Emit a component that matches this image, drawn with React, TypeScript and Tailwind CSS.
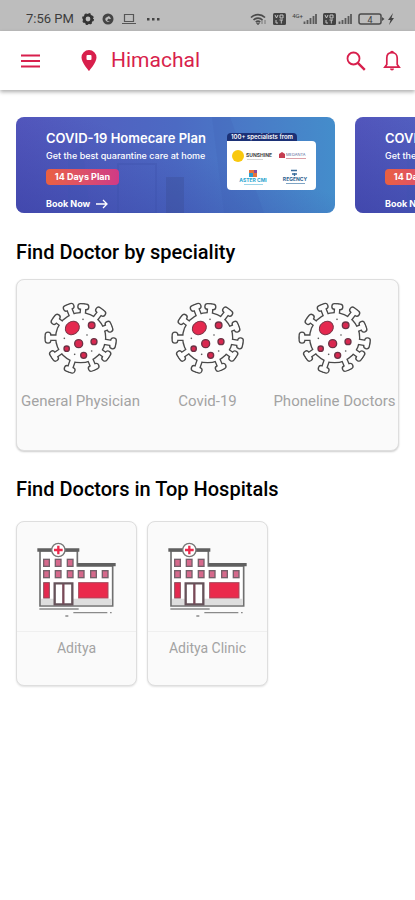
import React from 'react';

const specialities = ['General Physician', 'Covid-19', 'Phoneline Doctors'];
const hospitals = ['Aditya', 'Aditya Clinic'];

const spikes = [
  [77, 19], [121, 17], [173, 32], [198, 77], [210, 127], [190, 165],
  [152, 199], [80, 205], [33, 165], [15, 110], [38, 55],
];

const cells = [
  [146, 73, 10], [153, 122, 9], [107, 128, 12], [71, 143, 8], [122, 163, 9],
];

const dots = [[120, 55], [132, 102], [64, 112], [146, 150], [95, 160]];

const windows = [
  [131, 268], [166, 268], [202, 268],
  [131, 302], [166, 302], [202, 302], [235, 302], [272, 302], [307, 302],
];

const VirusLayer: React.FC<{ color: string; inset: number }> = ({ color, inset }) => (
  <g fill={color} stroke={color} strokeLinecap="round">
    <circle cx="113" cy="110" r={77 - inset} stroke="none" />
    {spikes.map(([x, y]) => {
      const angle = (Math.atan2(y - 110, x - 113) * 180) / Math.PI;
      const length = Math.hypot(x - 113, y - 110);
      return (
        <g key={`${x}-${y}`} transform={`translate(113 110) rotate(${angle})`}>
          <path d={`M40 0H${length}`} strokeWidth={20 - inset * 2} />
          <path d={`M${length} -8V8`} strokeWidth={21 - inset * 2} />
        </g>
      );
    })}
  </g>
);

const VirusIcon: React.FC = () => (
  <svg viewBox="0 0 225 225" className="h-[75px] w-[75px]" aria-hidden="true">
    <VirusLayer color="#4a4a4a" inset={0} />
    <VirusLayer color="#fdfdfd" inset={4} />
    <ellipse cx="88" cy="81" rx="22" ry="19" transform="rotate(-35 88 81)" fill="#e5294f" stroke="#7a3446" strokeWidth="3" />
    {cells.map(([x, y, r]) => (
      <circle key={`${x}-${y}`} cx={x} cy={y} r={r} fill="#d92850" stroke="#6b3345" strokeWidth="4" />
    ))}
    {dots.map(([x, y]) => (
      <circle key={`${x}-${y}`} cx={x} cy={y} r="2.5" fill="#555" />
    ))}
  </svg>
);

const HospitalIcon: React.FC = () => (
  <svg viewBox="105 210 249 240" className="h-20 w-[83px]" aria-hidden="true">
    <path d="M120 242H232V288H338V408H120Z" fill="#fff" stroke="#707070" strokeWidth="5" />
    <path d="M123 386H335V405H123Z" fill="#dedede" />
    <path d="M112 240H238M232 284H347" stroke="#606060" strokeWidth="10" />
    {windows.map(([x, y]) => (
      <rect key={`${x}-${y}`} x={x} y={y} width="17" height="21" fill="#d6698c" stroke="#75606a" strokeWidth="4" />
    ))}
    <rect x="131" y="338" width="17" height="46" fill="#e5294f" stroke="#8a4a58" strokeWidth="3" />
    <rect x="236" y="338" width="88" height="46" fill="#ea2a4c" stroke="#a8485c" strokeWidth="3" />
    <path d="M164 340H217V403H164Z" fill="#fff" stroke="#66535a" strokeWidth="7" />
    <path d="M190 342V402" stroke="#7a4a58" strokeWidth="7" />
    <circle cx="175" cy="240" r="20" fill="#fff" stroke="#777" strokeWidth="4" />
    <path d="M175 227V253M162 240H188" stroke="#ea2a4c" strokeWidth="7" />
    <path d="M118 417H236M220 428H322M330 428H335M196 438H205" stroke="#8a8a8a" strokeWidth="4" />
  </svg>
);

const SignalIcon: React.FC = () => (
  <svg viewBox="0 0 14 12" className="h-3 w-3.5" aria-hidden="true">
    <path d="M1.5 11V8.500M4.500 11V7M7.500 11V5M10.500 11V3M13 11V1" stroke="#5a5a5a" strokeWidth="1.800" />
  </svg>
);

const VolteIcon: React.FC = () => (
  <svg viewBox="0 0 13 12" className="h-3 w-[13px]" aria-hidden="true">
    <rect width="13" height="12" rx="1.500" fill="#444" />
    <path d="M2 2l1.500 3L5 2M7 2h3v3H7zM3 7v3h2M6.500 7H10M8.300 7v3.500" fill="none" stroke="#c4c4c4" />
  </svg>
);

const StatusBar: React.FC = () => (
  <div className="flex h-[31px] items-center bg-[#bdbdbd] pt-[7px] pr-5 pl-[26px] text-[#3c3c3c]">
    <span className="text-[13px]">7:56 PM</span>
    <div className="ml-2 flex items-center gap-2">
      <svg viewBox="0 0 12 12" className="h-3 w-3" aria-hidden="true">
        <circle cx="6" cy="6" r="3.800" fill="none" stroke="#333" strokeWidth="2.800" />
        <circle cx="6" cy="6" r="5.300" fill="none" stroke="#333" strokeWidth="1.300" strokeDasharray="2.100 2.060" />
      </svg>
      <svg viewBox="0 0 12 12" className="h-3 w-3" aria-hidden="true">
        <circle cx="6" cy="6" r="5.500" fill="#444" />
        <path d="M3.500 5L7 3l2 2.500-1 .8L6.500 5.500 5 7.500 8 9l-3-.2L3.300 7z" fill="#bdbdbd" />
      </svg>
      <svg viewBox="0 0 14 12" className="h-3 w-3.5" aria-hidden="true">
        <path d="M2.500 1.500h9v7h-9zM0 10.500h14" fill="none" stroke="#555" strokeWidth="1.200" />
      </svg>
      <svg viewBox="0 0 14 4" className="ml-0.5 h-1 w-3.5" aria-hidden="true">
        <path d="M1 1h2.500v2.500H1zM6 1h2.500v2.500H6zM11 1h2.500v2.500H11z" fill="#444" />
      </svg>
    </div>
    <div className="ml-auto flex items-center gap-1.5">
      <svg viewBox="0 0 17 12" className="h-3 w-[17px]" aria-hidden="true">
        <path d="M1 4.500a10 10 0 0114 0M3.500 7a6.500 6.500 0 019 0M5.800 9.200a3.200 3.200 0 014.400 0" fill="none" stroke="#4a4a4a" strokeWidth="1.700" />
        <path d="M8 12l-1.500-2h3zM12 11V7m3 0v4" fill="#4a4a4a" stroke="#666" strokeWidth=".8" />
      </svg>
      <VolteIcon />
      <span className="flex items-end">
        <span className="self-start text-[6px] leading-none">4G+</span>
        <SignalIcon />
      </span>
      <span className="flex gap-0.5">
        <VolteIcon />
        <SignalIcon />
      </span>
      <span className="flex items-center gap-0.5">
        <svg viewBox="0 0 27 12" className="h-3 w-[27px]" aria-hidden="true">
          <rect x="1" y="1" width="22" height="10" rx="2" fill="none" stroke="#4a4a4a" strokeWidth="1.500" />
          <path d="M24 4l2.500 2L24 8z" fill="#4a4a4a" />
          <text x="12" y="9.500" textAnchor="middle" fontSize="9" fill="#3c3c3c">4</text>
        </svg>
        <svg viewBox="0 0 8 12" className="h-3 w-2" aria-hidden="true">
          <path d="M6 0L1 7h2.500L2 12l5-7H4.500z" fill="#444" />
        </svg>
      </span>
    </div>
  </div>
);

const Header: React.FC = () => (
  <header className="flex h-[59px] items-center bg-white pr-3.5 pl-[21px] text-[#d81f4c] shadow-[0_2px_4px_rgba(0,0,0,0.32)]">
    <button type="button" aria-label="Menu">
      <svg viewBox="0 0 19 14" className="h-3.5 w-[19px]" aria-hidden="true">
        <path d="M0 1.500h19M0 7h19M0 12.500h19" stroke="currentColor" strokeWidth="1.800" />
      </svg>
    </button>
    <button type="button" className="ml-[41px] flex items-center gap-3.5 text-[21px]">
      <svg viewBox="0 0 16 21" className="h-[21px] w-4" aria-hidden="true">
        <path d="M8 0a7.500 7.500 0 00-7.500 7.500C.5 12.500 8 21 8 21s7.500-8.500 7.500-13.500A7.500 7.500 0 008 0z" fill="currentColor" />
        <rect x="5.500" y="5" width="5" height="5" rx="1" fill="#fff" />
      </svg>
      Himachal
    </button>
    <div className="ml-auto flex items-center gap-[17px]">
      <button type="button" aria-label="Search">
        <svg viewBox="0 0 20 20" className="h-5 w-5" aria-hidden="true">
          <circle cx="7.500" cy="7.500" r="6" fill="none" stroke="currentColor" strokeWidth="1.800" />
          <path d="M11.800 11.800l7 7" stroke="currentColor" strokeWidth="2.400" />
        </svg>
      </button>
      <button type="button" aria-label="Notifications">
        <svg viewBox="0 0 18 21" className="h-[21px] w-[18px]" aria-hidden="true">
          <path d="M9 2.700c-3.400 0-5.200 2.300-5.200 5.300v6.500L1.800 17.200h14.400l-2-2.700V8c0-3-1.800-5.300-5.200-5.300z" fill="none" stroke="currentColor" strokeWidth="1.700" />
          <path d="M7 2.700a2 2 0 014 0zM7 18.500h4a2 2 0 01-4 0z" fill="currentColor" />
        </svg>
      </button>
    </div>
  </header>
);

const PartnerLogos: React.FC = () => (
  <svg viewBox="0 0 89 49" className="block h-[49px] w-[89px]" aria-hidden="true">
    <circle cx="11" cy="15" r="6" fill="#f9c80e" />
    <text x="19" y="16" fontSize="5" fontWeight="700" fill="#444">SUNSHINE</text>
    <path d="M20 18.500h16" stroke="#ccc" strokeWidth=".8" />
    <path d="M52 17v-4l3-2 3 2v4z" fill="#c63d50" />
    <text x="59" y="15" fontSize="4" fill="#5d6a9a">MEDANTA</text>
    <path d="M59 17.500h20" stroke="#dba0a8" />
    <path d="M22 29h8v7h-8z" fill="#e8743b" />
    <path d="M22 32h4v4h-4z" fill="#2b9fd0" />
    <path d="M27 29h3v3h-3z" fill="#8a4ba0" />
    <text x="26" y="41" textAnchor="middle" fontSize="5" fontWeight="700" fill="#2aa5cf">ASTER CMI</text>
    <path d="M17 43.500h19" stroke="#9cd5e8" />
    <path d="M64 29.500h6M65 33h5M67.500 32v3" stroke="#3a6e9c" strokeWidth="1.300" />
    <text x="68" y="40" textAnchor="middle" fontSize="5" fontWeight="700" fill="#2d5f8f">REGENCY</text>
    <path d="M59 42.500h19" stroke="#7fa4c4" />
  </svg>
);

const Banner: React.FC = () => (
  <article className="relative flex h-24 w-[319px] shrink-0 overflow-hidden rounded-lg bg-linear-to-r from-[#5558be] via-[#4c6ac3] to-[#448dcb] pl-[30px] font-[Inter,sans-serif] text-white">
    <div className="absolute inset-0 bg-linear-to-tr from-[#2f389c]/50 to-transparent to-60%" />
    {/* Faint room behind the offer */}
    <svg viewBox="0 0 319 96" className="absolute inset-0 h-full w-full" aria-hidden="true">
      <path d="M102 47h38v49h-38z" fill="none" stroke="#3a4fa8" strokeOpacity=".3" strokeWidth="2" />
      <path d="M150 60h18v36h-18z" fill="#37488c" fillOpacity=".3" />
      <path d="M52 96V38l14-12 8 70zM196 0l12 96h40L214 0z" fill="#3a55b0" fillOpacity=".15" />
    </svg>
    <div className="relative flex flex-col items-start pt-[13px] whitespace-nowrap">
      <h3 className="text-[13px] leading-4 font-semibold">COVID-19 Homecare Plan</h3>
      <p className="mt-[3px] text-[9px] leading-[14px] font-medium">Get the best quarantine care at home</p>
      <span className="mt-1.5 w-[73px] rounded bg-linear-to-r from-[#ea6040] to-[#cf3a86] text-center text-[9px] leading-4 font-bold">14 Days Plan</span>
      <a href="#book" className="mt-3 flex items-center gap-1.5 text-[9px] leading-[14px] font-bold">
        Book Now
        <svg viewBox="0 0 12 10" className="h-2.5 w-3" aria-hidden="true">
          <path d="M0 5h11M7 1l4 4-4 4" fill="none" stroke="currentColor" strokeWidth="1.300" />
        </svg>
      </a>
    </div>
    <div className="relative mr-[19px] ml-auto w-[89px] pt-4">
      <p className="w-[70px] rounded-t bg-[#1c3176] text-center text-[6px] leading-[8px] font-semibold whitespace-nowrap">100+ specialists from</p>
      <div className="rounded-r rounded-bl bg-white">
        <PartnerLogos />
      </div>
    </div>
  </article>
);

const App: React.FC = () => {
  return (
    <div className="min-h-screen overflow-x-hidden bg-white font-[Roboto,sans-serif] text-black">
      <StatusBar />
      <Header />

      <main className="pt-[27px] pl-4">
        {/* Offers */}
        <section className="flex gap-5 overflow-hidden" aria-label="Offers">
          <Banner />
          <Banner />
        </section>

        {/* Specialities */}
        <h2 className="mt-[25px] text-xl leading-7 font-medium">Find Doctor by speciality</h2>
        <ul className="mt-[13px] mr-4 grid h-[172px] grid-cols-3 rounded-lg border border-[#dedede] bg-[#fafafa] pt-[21px] shadow-[0_1px_2px_rgba(0,0,0,0.2)]">
          {specialities.map((name) => (
            <li key={name} className="flex flex-col items-center">
              <VirusIcon />
              <span className="mt-[15px] text-[15px] leading-5 whitespace-nowrap text-[#a3a3a3]">{name}</span>
            </li>
          ))}
        </ul>

        {/* Hospitals */}
        <h2 className="mt-6 text-xl leading-7 font-medium">Find Doctors in Top Hospitals</h2>
        <ul className="mt-[18px] flex gap-2.5">
          {hospitals.map((name) => (
            <li key={name} className="h-[165px] w-[121px] rounded-lg border border-[#dedede] bg-[#fafafa] text-center shadow-[0_1px_2px_rgba(0,0,0,0.12)]">
              <div className="flex h-[110px] justify-center border-b border-[#efefef] pt-[18px]">
                <HospitalIcon />
              </div>
              <span className="mt-1.5 block text-sm leading-5 text-[#a3a3a3]">{name}</span>
            </li>
          ))}
        </ul>
      </main>
    </div>
  );
};

export default App;
